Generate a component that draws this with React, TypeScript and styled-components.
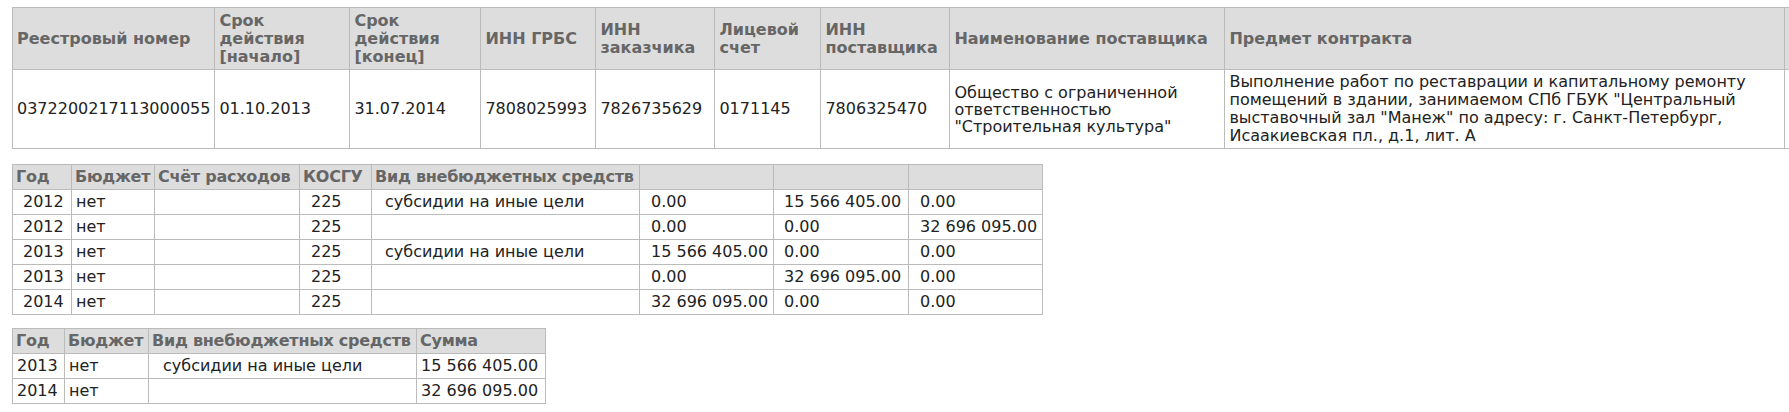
import styled, { createGlobalStyle } from 'styled-components';

const contract = {
  number: '0372200217113000055',
  start: '01.10.2013',
  end: '31.07.2014',
  grbs: '7808025993',
  customer: '7826735629',
  account: '0171145',
  supplierInn: '7806325470',
  supplier: 'Общество с ограниченной ответственностью "Строительная культура"',
  subject:
    'Выполнение работ по реставрации и капитальному ремонту помещений в здании, занимаемом СПб ГБУК "Центральный выставочный зал "Манеж" по адресу: г. Санкт-Петербург, Исаакиевская пл., д.1, лит. А',
};

const contractCols = [201, 135, 131, 115, 119, 106, 129, 275, 560, 200];

const plan = [
  { year: '2012', kind: 'субсидии на иные цели', a: '0.00', b: '15 566 405.00', c: '0.00' },
  { year: '2012', kind: '', a: '0.00', b: '0.00', c: '32 696 095.00' },
  { year: '2013', kind: 'субсидии на иные цели', a: '15 566 405.00', b: '0.00', c: '0.00' },
  { year: '2013', kind: '', a: '0.00', b: '32 696 095.00', c: '0.00' },
  { year: '2014', kind: '', a: '32 696 095.00', b: '0.00', c: '0.00' },
];

const planCols = [59, 83, 145, 72, 268, 134, 135, 134];

const totals = [
  { year: '2013', kind: 'субсидии на иные цели', sum: '15 566 405.00' },
  { year: '2014', kind: '', sum: '32 696 095.00' },
];

const totalCols = [52, 84, 268, 129];

export default function App() {
  return (
    <>
      <GlobalStyle />
      <Page>
        <Grid $after={15}>
          <colgroup>
            {contractCols.map((w, i) => (
              <Col key={i} $w={w} />
            ))}
          </colgroup>
          <thead>
            <tr>
              <Head $tall>Реестровый номер</Head>
              <Head $tall>Срок действия [начало]</Head>
              <Head $tall>Срок действия [конец]</Head>
              <Head $tall>ИНН ГРБС</Head>
              <Head $tall>ИНН заказчика</Head>
              <Head $tall>Лицевой счет</Head>
              <Head $tall>ИНН поставщика</Head>
              <Head $tall>Наименование поставщика</Head>
              <Head $tall>Предмет контракта</Head>
              <Head $tall $link>Цена контракта</Head>
            </tr>
          </thead>
          <tbody>
            <tr>
              <Cell>{contract.number}</Cell>
              <Cell>{contract.start}</Cell>
              <Cell>{contract.end}</Cell>
              <Cell>{contract.grbs}</Cell>
              <Cell>{contract.customer}</Cell>
              <Cell>{contract.account}</Cell>
              <Cell>{contract.supplierInn}</Cell>
              <Cell $small>{contract.supplier}</Cell>
              <Cell>{contract.subject}</Cell>
              <Cell />
            </tr>
          </tbody>
        </Grid>

        <Grid $after={13}>
          <colgroup>
            {planCols.map((w, i) => (
              <Col key={i} $w={w} />
            ))}
          </colgroup>
          <thead>
            <tr>
              <Head $compact>Год</Head>
              <Head $compact>Бюджет</Head>
              <Head $compact>Счёт расходов</Head>
              <Head $compact>КОСГУ</Head>
              <Head $compact>Вид внебюджетных средств</Head>
              <Head $compact />
              <Head $compact />
              <Head $compact />
            </tr>
          </thead>
          <tbody>
            {plan.map((r, i) => (
              <tr key={i}>
                <Cell $indent={6}>{r.year}</Cell>
                <Cell>нет</Cell>
                <Cell />
                <Cell $indent={7}>225</Cell>
                <Cell $indent={9}>{r.kind}</Cell>
                <Cell $indent={7}>{r.a}</Cell>
                <Cell $indent={6}>{r.b}</Cell>
                <Cell $indent={7}>{r.c}</Cell>
              </tr>
            ))}
          </tbody>
        </Grid>

        <Grid>
          <colgroup>
            {totalCols.map((w, i) => (
              <Col key={i} $w={w} />
            ))}
          </colgroup>
          <thead>
            <tr>
              <Head $compact>Год</Head>
              <Head $compact>Бюджет</Head>
              <Head $compact>Вид внебюджетных средств</Head>
              <Head $compact>Сумма</Head>
            </tr>
          </thead>
          <tbody>
            {totals.map((r, i) => (
              <tr key={i}>
                <Cell>{r.year}</Cell>
                <Cell>нет</Cell>
                <Cell $indent={10}>{r.kind}</Cell>
                <Cell>{r.sum}</Cell>
              </tr>
            ))}
          </tbody>
        </Grid>
      </Page>
    </>
  );
}

const GlobalStyle = createGlobalStyle`
  html, body {
    margin: 0;
    padding: 0;
    background: #ffffff;
    overflow: hidden;
  }

  body {
    font-family: 'DejaVu Sans', Verdana, sans-serif;
    font-size: 16px;
    color: #222222;
  }
`;

const Page = styled.div`
  display: flex;
  flex-direction: column;
  align-items: flex-start;
  padding: 7px 0 0 12px;
  width: max-content;
`;

const Grid = styled.table<{ $after?: number }>`
  border-collapse: collapse;
  width: max-content;
  margin-bottom: ${({ $after }) => $after ?? 0}px;
`;

const Col = styled.col<{ $w: number }>`
  width: ${({ $w }) => $w}px;
`;

const Head = styled.th<{ $tall?: boolean; $link?: boolean; $compact?: boolean }>`
  background: #dddddd;
  border: 1px solid #bbbbbb;
  color: ${({ $link }) => ($link ? '#c9782f' : '#666666')};
  font-weight: bold;
  text-align: left;
  vertical-align: middle;
  line-height: 18px;
  padding: ${({ $compact }) => ($compact ? '3px 3px' : '3px 4px')};
  letter-spacing: ${({ $compact }) => ($compact ? '-0.25px' : 'normal')};
  white-space: ${({ $compact }) => ($compact ? 'nowrap' : 'normal')};
  height: ${({ $tall }) => ($tall ? '55px' : 'auto')};
`;

const Cell = styled.td<{ $indent?: number; $small?: boolean }>`
  border: 1px solid #bbbbbb;
  vertical-align: middle;
  line-height: ${({ $small }) => ($small ? '17px' : '18px')};
  padding: 3px 4px 3px ${({ $indent }) => 4 + ($indent ?? 0)}px;
  white-space: normal;
`;
